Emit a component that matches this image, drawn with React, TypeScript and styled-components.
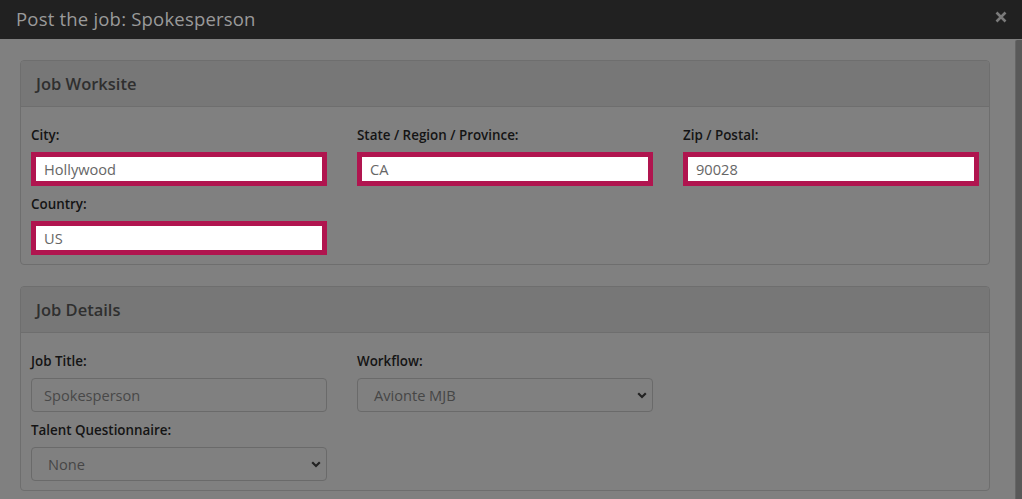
import React from "react";
import styled, { createGlobalStyle } from "styled-components";

const Global = createGlobalStyle`
  html, body { margin: 0; padding: 0; height: 100%; }
  body { background: #808080; font-family: "Open Sans", "Noto Sans", sans-serif; overflow: hidden; }
  #root { height: 100%; }
`;

const Modal = styled.div`
  display: flex;
  flex-direction: column;
  width: 1022px;
  height: 499px;
  background: #808080;
`;

const TitleBar = styled.div`
  height: 39px;
  flex: none;
  background: #212121;
  display: flex;
  align-items: center;
  justify-content: space-between;
  padding: 0 15px 0 16px;
  box-sizing: border-box;
`;

const Title = styled.h4`
  margin: 0;
  font-size: 18.5px;
  font-weight: 400;
  color: #9a9a9a;
  letter-spacing: 0.2px;
  padding-bottom: 2px;
`;

const Close = styled.button`
  border: none;
  background: none;
  padding: 0;
  margin-top: -6px;
  display: flex;
  cursor: pointer;
`;

const BodyRow = styled.div`
  flex: 1;
  display: flex;
  min-height: 0;
`;

const Body = styled.div`
  flex: 1;
  padding: 21px 25px 0 20px;
  display: flex;
  flex-direction: column;
  gap: 21px;
`;

const Scrollbar = styled.div`
  width: 8px;
  flex: none;
  margin-top: 1px;
  background: #595959;
  border-left: 1px solid #666;
  border-radius: 2px 2px 0 0;
`;

const Panel = styled.section`
  border: 1px solid #6e6e6e;
  border-radius: 4px;
  background: #808080;
`;

const PanelHeader = styled.div`
  height: 45px;
  background: #777777;
  border-bottom: 1px solid #6e6e6e;
  border-radius: 3px 3px 0 0;
  display: flex;
  align-items: center;
  padding: 0 15px;
  font-size: 16.5px;
  font-weight: 600;
  color: #2f2f2f;
`;

const PanelBody = styled.div`
  padding: 13px 10px 9px 10px;
  display: grid;
  grid-template-columns: repeat(3, 296px);
  column-gap: 30px;
  row-gap: 3px;
`;

const Field = styled.div`
  display: flex;
  flex-direction: column;
`;

const Label = styled.label`
  font-size: 13.4px;
  font-weight: 600;
  color: #141414;
  height: 32px;
  display: flex;
  align-items: center;
  padding-bottom: 2px;
  box-sizing: border-box;
`;

const HighlightInput = styled.input`
  box-sizing: border-box;
  width: 296px;
  height: 34px;
  border: 5px solid #b0154f;
  background: #fff;
  padding: 0 8px;
  font-family: inherit;
  font-size: 14.6px;
  color: #666;
  outline: none;
`;

const DimInput = styled.input`
  box-sizing: border-box;
  width: 296px;
  height: 34px;
  border: 1px solid #6a6a6a;
  border-radius: 4px;
  background: #808080;
  padding: 0 12px;
  font-family: inherit;
  font-size: 14.6px;
  color: #484848;
  outline: none;
`;

const SelectBox = styled.div`
  box-sizing: border-box;
  width: 296px;
  height: 34px;
  border: 1px solid #6a6a6a;
  border-radius: 4px;
  background: #808080;
  padding: 0 5px 0 16px;
  display: flex;
  align-items: center;
  justify-content: space-between;
  font-size: 14.6px;
  color: #464646;
`;

const Chevron = () => (
  <svg width="10" height="7" viewBox="0 0 10 7">
    <path d="M1.2 1.3 L5 5 L8.8 1.3" fill="none" stroke="#222" strokeWidth="2.2" />
  </svg>
);

export default function App() {
  return (
    <>
      <Global />
      <Modal>
        <TitleBar>
          <Title>Post the job: Spokesperson</Title>
          <Close aria-label="close">
            <svg width="12" height="12" viewBox="0 0 12 12">
              <path d="M1.5 1.5 L10.5 10.5 M10.5 1.5 L1.5 10.5" stroke="#7a7a7a" strokeWidth="2.6" />
            </svg>
          </Close>
        </TitleBar>
        <BodyRow>
          <Body>
            <Panel>
              <PanelHeader>Job Worksite</PanelHeader>
              <PanelBody>
                <Field>
                  <Label>City:</Label>
                  <HighlightInput defaultValue="Hollywood" />
                </Field>
                <Field>
                  <Label>State / Region / Province:</Label>
                  <HighlightInput defaultValue="CA" />
                </Field>
                <Field>
                  <Label>Zip / Postal:</Label>
                  <HighlightInput defaultValue="90028" />
                </Field>
                <Field>
                  <Label>Country:</Label>
                  <HighlightInput defaultValue="US" />
                </Field>
              </PanelBody>
            </Panel>
            <Panel>
              <PanelHeader>Job Details</PanelHeader>
              <PanelBody>
                <Field>
                  <Label>Job Title:</Label>
                  <DimInput defaultValue="Spokesperson" />
                </Field>
                <Field>
                  <Label>Workflow:</Label>
                  <SelectBox>
                    Avionte MJB
                    <Chevron />
                  </SelectBox>
                </Field>
                <div />
                <Field>
                  <Label>Talent Questionnaire:</Label>
                  <SelectBox>
                    None
                    <Chevron />
                  </SelectBox>
                </Field>
              </PanelBody>
            </Panel>
          </Body>
          <Scrollbar />
        </BodyRow>
      </Modal>
    </>
  );
}
